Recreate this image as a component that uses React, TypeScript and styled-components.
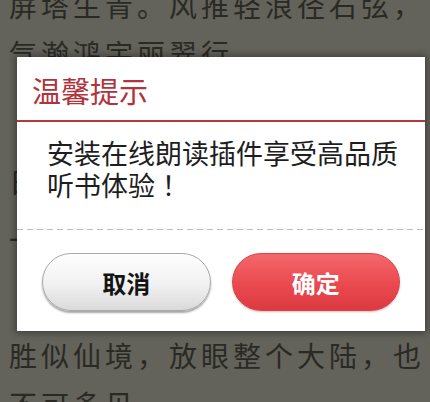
import React from "react";
import styled, { createGlobalStyle } from "styled-components";

const Global = createGlobalStyle`
  html, body {
    margin: 0;
    padding: 0;
    width: 430px;
    height: 402px;
    overflow: hidden;
    background: #63625b;
  }
  * { box-sizing: border-box; }
`;

const FONT = `"Noto Sans CJK SC", "Noto Sans", sans-serif`;

const Page = styled.div`
  position: relative;
  width: 430px;
  height: 402px;
  overflow: hidden;
  background: #63625b;
  font-family: ${FONT};
`;

const Reader = styled.div`
  display: flex;
  flex-direction: column;
  padding-left: 9px;
  margin-top: -19px;
`;

const Line = styled.div<{ $gap: number }>`
  margin-top: ${(p) => p.$gap}px;
  font-size: 28px;
  line-height: 48px;
  letter-spacing: 4px;
  color: #2a2a25;
  white-space: nowrap;
`;

const Dialog = styled.div`
  position: absolute;
  left: 17px;
  top: 57px;
  width: 408px;
  background: #ffffff;
  box-shadow: 0 0 7px 2px rgba(0, 0, 0, 0.35);
  display: flex;
  flex-direction: column;
`;

const Title = styled.div`
  height: 65px;
  display: flex;
  align-items: center;
  padding-left: 15px;
  padding-top: 2px;
  font-size: 29px;
  color: #b1333c;
  border-bottom: 2px solid #b23a41;
`;

const Message = styled.div`
  padding: 15px 22px 27px 30px;
  font-size: 27px;
  line-height: 32px;
  color: #1e1e1e;
  height: 107px;
`;

const Punct = styled.span`
  font-family: "Noto Sans CJK TC", "Noto Sans CJK SC", sans-serif;
`;

const Dashed = styled.div`
  height: 1px;
  background-image: repeating-linear-gradient(
    to right,
    #bcbcbc 0 6px,
    transparent 6px 10px
  );
`;

const Actions = styled.div`
  display: grid;
  grid-template-columns: 1fr 1fr;
  gap: 21px;
  padding: 23px 25px 20px 25px;
`;

const Button = styled.button<{ $primary?: boolean }>`
  height: 58px;
  border-radius: 29px;
  font-family: ${FONT};
  font-size: 24px;
  font-weight: 700;
  display: flex;
  align-items: center;
  justify-content: center;
  cursor: pointer;
  color: ${(p) => (p.$primary ? "#ffffff" : "#141414")};
  border: 1px solid ${(p) => (p.$primary ? "#d9444a" : "#a9a9a9")};
  background: ${(p) =>
    p.$primary
      ? "linear-gradient(to bottom, #f4676b 0%, #e9494f 55%, #dc3a40 100%)"
      : "linear-gradient(to bottom, #fefefe 0%, #f1f1f1 55%, #dadada 100%)"};
  box-shadow: ${(p) =>
    p.$primary
      ? "0 1px 2px rgba(120, 0, 0, 0.25)"
      : "0 2px 2px rgba(0, 0, 0, 0.35)"};
`;

const lines: { text: string; gap: number }[] = [
  { text: "屏塔生青。风推轻浪径石弦，", gap: 0 },
  { text: "气瀚鸿宇丽翠行。", gap: 0 },
  { text: "日月同辉，照耀山河万里，", gap: 80 },
  { text: "一草一木皆有灵性，美景", gap: 10 },
  { text: "胜似仙境，放眼整个大陆，也", gap: 68 },
  { text: "不可多见。", gap: 1 },
];

export default function App() {
  return (
    <Page>
      <Global />
      <Reader>
        {lines.map((l, i) => (
          <Line key={i} $gap={l.gap}>
            {l.text}
          </Line>
        ))}
      </Reader>
      <Dialog>
        <Title>温馨提示</Title>
        <Message>
          安装在线朗读插件享受高品质听书体验<Punct>！</Punct>
        </Message>
        <Dashed />
        <Actions>
          <Button>取消</Button>
          <Button $primary>确定</Button>
        </Actions>
      </Dialog>
    </Page>
  );
}
